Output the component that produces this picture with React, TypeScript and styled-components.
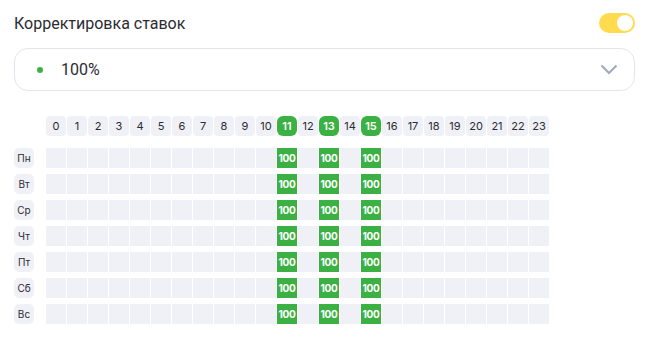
import styled, { createGlobalStyle } from "styled-components";

const hours = Array.from({ length: 24 }, (_, i) => i);
const days = ["Пн", "Вт", "Ср", "Чт", "Пт", "Сб", "Вс"];
const active = [11, 13, 15];

const GlobalStyle = createGlobalStyle`
    body {
        margin: 0;
        background: #fff;
        font-family: Inter, "Noto Sans", Arial, sans-serif;
        color: #2b2b33;
    }
`;

const App = () => {
    return (
        <>
            <GlobalStyle />
            <StyledPanel>
                <StyledHeader>
                    <StyledTitle>Корректировка ставок</StyledTitle>
                    <StyledToggle>
                        <span />
                    </StyledToggle>
                </StyledHeader>

                <StyledSelect>
                    <StyledDot />
                    <StyledValue>100%</StyledValue>
                    <svg width="18" height="11" viewBox="0 0 18 11">
                        <path d="M1.5 1.5 L9 9 L16.5 1.5" fill="none" stroke="#a3a8b8" strokeWidth="2" />
                    </svg>
                </StyledSelect>

                <StyledGrid>
                    <div />
                    {hours.map(h => (
                        <StyledHour key={h} $on={active.includes(h)}>{h}</StyledHour>
                    ))}
                    {days.map(d => (
                        <StyledRow key={d}>
                            <StyledDay>{d}</StyledDay>
                            {hours.map(h => (
                                <StyledCell key={h} $on={active.includes(h)}>
                                    {active.includes(h) ? "100" : ""}
                                </StyledCell>
                            ))}
                        </StyledRow>
                    ))}
                </StyledGrid>
            </StyledPanel>
        </>
    );
};

const StyledPanel = styled.div`
    width: 657px;
    padding: 11px 22px 0 14px;
    box-sizing: border-box;
`;

const StyledHeader = styled.div`
    display: flex;
    justify-content: space-between;
    align-items: center;
    height: 24px;
`;

const StyledTitle = styled.h2`
    margin: 0;
    font-family: Roboto, "Noto Sans", sans-serif;
    font-size: 16px;
    font-weight: 400;
    color: #2b2b33;
`;

const StyledToggle = styled.div`
    width: 36px;
    height: 20px;
    border-radius: 10px;
    background: #ffdb4d;
    display: flex;
    align-items: center;
    justify-content: flex-end;
    padding: 0 2px;
    box-sizing: border-box;
    span {
        width: 16px;
        height: 16px;
        border-radius: 50%;
        background: #fff;
    }
`;

const StyledSelect = styled.div`
    margin-top: 13px;
    height: 43px;
    border: 1px solid #e3e5ee;
    border-radius: 14px;
    display: flex;
    align-items: center;
    padding: 0 16px 0 22px;
    box-sizing: border-box;
`;

const StyledDot = styled.span`
    width: 6px;
    height: 6px;
    border-radius: 50%;
    background: #3bb143;
    margin-right: 18px;
`;

const StyledValue = styled.span`
    flex: 1;
    font-family: Roboto, "Noto Sans", sans-serif;
    font-size: 16px;
    color: #2b2b33;
`;

const StyledGrid = styled.div`
    margin-top: 25px;
    display: grid;
    grid-template-columns: 31px repeat(24, 20px);
    column-gap: 1px;
    row-gap: 6px;
    font-size: 11px;
`;

const StyledRow = styled.div`
    display: contents;
`;

const StyledHour = styled.div<{ $on: boolean }>`
    height: 20px;
    border-radius: ${p => (p.$on ? "6px" : "4px")};
    background: ${p => (p.$on ? "#3bb143" : "#eff1f6")};
    color: ${p => (p.$on ? "#fff" : "#2b2b33")};
    font-weight: ${p => (p.$on ? 600 : 400)};
    display: flex;
    align-items: center;
    justify-content: center;
    margin-bottom: 6px;
`;

const StyledDay = styled.div`
    width: 20px;
    height: 20px;
    border-radius: 5px;
    background: #eff1f6;
    display: flex;
    align-items: center;
    justify-content: center;
    font-size: 10px;
`;

const StyledCell = styled.div<{ $on: boolean }>`
    height: 20px;
    background: ${p => (p.$on ? "#3bb143" : "#eff1f6")};
    color: #fff;
    font-size: 10px;
    font-weight: 700;
    display: flex;
    align-items: center;
    justify-content: center;
    letter-spacing: -0.3px;
`;

export default App;
